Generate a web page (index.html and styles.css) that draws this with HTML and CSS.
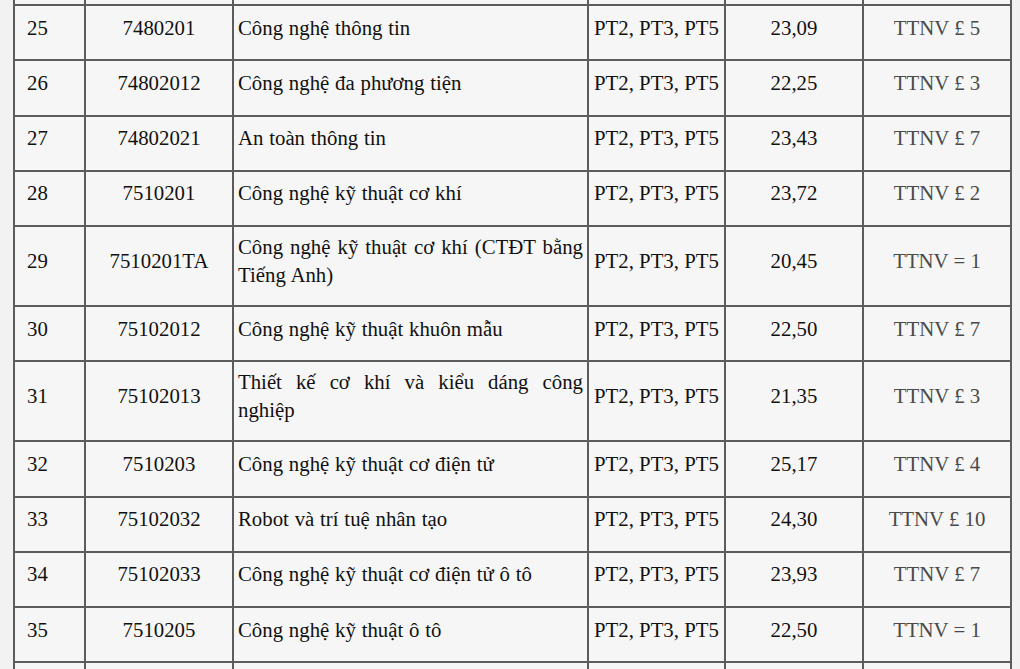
FILE: index.html
```html
<!DOCTYPE html>
<html lang="vi">
<head>
<meta charset="utf-8">
<title>Điểm chuẩn</title>
<link rel="stylesheet" href="styles.css">
</head>
<body>
<table class="scores">
  <colgroup>
    <col class="c-stt"><col class="c-code"><col class="c-name"><col class="c-method"><col class="c-score"><col class="c-cond">
  </colgroup>
  <tbody>
    <tr class="stub"><td></td><td></td><td></td><td></td><td></td><td></td></tr>
    <tr><td class="stt">25</td><td class="code">7480201</td><td class="name">Công nghệ thông tin</td><td class="method">PT2, PT3, PT5</td><td class="score">23,09</td><td class="cond">TTNV £ 5</td></tr>
    <tr><td class="stt">26</td><td class="code">74802012</td><td class="name">Công nghệ đa phương tiện</td><td class="method">PT2, PT3, PT5</td><td class="score">22,25</td><td class="cond">TTNV £ 3</td></tr>
    <tr><td class="stt">27</td><td class="code">74802021</td><td class="name">An toàn thông tin</td><td class="method">PT2, PT3, PT5</td><td class="score">23,43</td><td class="cond">TTNV £ 7</td></tr>
    <tr><td class="stt">28</td><td class="code">7510201</td><td class="name">Công nghệ kỹ thuật cơ khí</td><td class="method">PT2, PT3, PT5</td><td class="score">23,72</td><td class="cond">TTNV £ 2</td></tr>
    <tr class="tall"><td class="stt">29</td><td class="code">7510201TA</td><td class="name">Công nghệ kỹ thuật cơ khí (CTĐT bằng Tiếng Anh)</td><td class="method">PT2, PT3, PT5</td><td class="score">20,45</td><td class="cond">TTNV = 1</td></tr>
    <tr><td class="stt">30</td><td class="code">75102012</td><td class="name">Công nghệ kỹ thuật khuôn mẫu</td><td class="method">PT2, PT3, PT5</td><td class="score">22,50</td><td class="cond">TTNV £ 7</td></tr>
    <tr class="tall"><td class="stt">31</td><td class="code">75102013</td><td class="name">Thiết kế cơ khí và kiểu dáng công nghiệp</td><td class="method">PT2, PT3, PT5</td><td class="score">21,35</td><td class="cond">TTNV £ 3</td></tr>
    <tr><td class="stt">32</td><td class="code">7510203</td><td class="name">Công nghệ kỹ thuật cơ điện tử</td><td class="method">PT2, PT3, PT5</td><td class="score">25,17</td><td class="cond">TTNV £ 4</td></tr>
    <tr><td class="stt">33</td><td class="code">75102032</td><td class="name">Robot và trí tuệ nhân tạo</td><td class="method">PT2, PT3, PT5</td><td class="score">24,30</td><td class="cond">TTNV £ 10</td></tr>
    <tr><td class="stt">34</td><td class="code">75102033</td><td class="name">Công nghệ kỹ thuật cơ điện tử ô tô</td><td class="method">PT2, PT3, PT5</td><td class="score">23,93</td><td class="cond">TTNV £ 7</td></tr>
    <tr><td class="stt">35</td><td class="code">7510205</td><td class="name">Công nghệ kỹ thuật ô tô</td><td class="method">PT2, PT3, PT5</td><td class="score">22,50</td><td class="cond">TTNV = 1</td></tr>
    <tr><td class="stt"></td><td class="code"></td><td class="name"></td><td class="method"></td><td class="score"></td><td class="cond"></td></tr>
  </tbody>
</table>
</body>
</html>
```

FILE: styles.css
```css
html, body {
  margin: 0;
  padding: 0;
  background: #f2f2f2;
  overflow: hidden;
}

body {
  padding-left: 13px;
  font-family: "Liberation Serif", "Times New Roman", serif;
}

.scores {
  border-collapse: collapse;
  table-layout: fixed;
  width: 997px;
  background: #f6f6f6;
  color: #111;
  font-size: 20.8px;
  line-height: 28px;
}

.c-stt { width: 71px; }
.c-code { width: 148px; }
.c-name { width: 355px; }
.c-method { width: 137px; }
.c-score { width: 138px; }
.c-cond { width: 148px; }

.scores td {
  border: 2px solid #5c5c5c;
  height: 43.25px;
  padding: 0 4px 10px 4px;
  vertical-align: middle;
}

.scores tr.tall td {
  height: 68px;
}

.scores tr.stub td {
  height: 4px;
  padding: 0;
  border-top: none;
}

.stt { padding-left: 12px !important; }
.code { text-align: center; }
.name { text-align: justify; word-spacing: 0.6px; }
.method { padding-left: 5px !important; white-space: nowrap; }
.score { text-align: center; }
.cond { text-align: center; color: #4a4a4a; }
```
